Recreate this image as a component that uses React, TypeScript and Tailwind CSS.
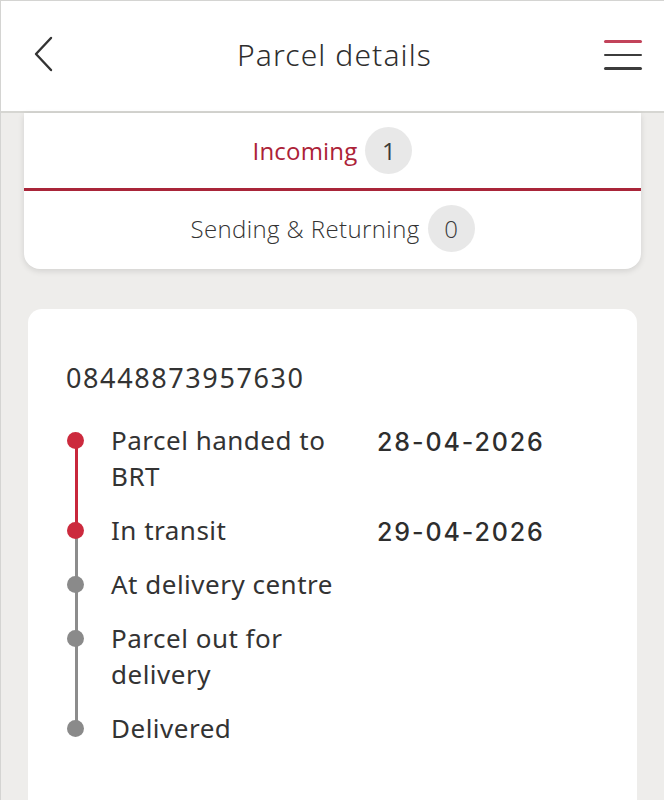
import React from "react";

const steps = [
  { label: "Parcel handed to BRT", date: "28-04-2026", done: true, lineRed: true },
  { label: "In transit", date: "29-04-2026", done: true, lineRed: false },
  { label: "At delivery centre", date: "", done: false, lineRed: false },
  { label: "Parcel out for delivery", date: "", done: false, lineRed: false },
  { label: "Delivered", date: "", done: false, lineRed: false },
];

export default function App() {
  return (
    <div className="w-[664px] h-[800px] overflow-hidden bg-[#eeedeb] border-l border-t border-[#d4d4d2] flex flex-col font-['Noto_Sans',sans-serif] text-[#333333]">
      {/* Header */}
      <header className="h-[112px] shrink-0 bg-white border-b-2 border-[#d6d6d2] flex items-center justify-between pl-[32px] pr-[22px] pb-[2px]">
        <svg width="22" height="36" viewBox="0 0 22 36" fill="none" className="mt-[-2px]">
          <path d="M18 2 L3 18 L18 34" stroke="#333" strokeWidth="2.4" strokeLinecap="round" strokeLinejoin="round" />
        </svg>
        <h1 className="text-[30px] font-light tracking-[1.1px] text-[#2e2e2e] leading-none ml-[10px]">Parcel details</h1>
        <div className="flex flex-col gap-[11px] w-[38px]">
          <span className="block h-[2.5px] bg-[#c2435a] rounded-full" />
          <span className="block h-[2.5px] bg-[#3c3c3c] rounded-full" />
          <span className="block h-[2.5px] bg-[#3c3c3c] rounded-full" />
        </div>
      </header>

      {/* Tabs card */}
      <div className="mx-[23px] bg-white rounded-b-[16px] shadow-[0_2px_6px_rgba(0,0,0,0.12)] flex flex-col font-['Open_Sans',sans-serif]">
        <div className="h-[75px] flex items-center justify-center gap-[8px]">
          <span className="text-[24px] text-[#ac2237] font-normal tracking-[0.2px]">Incoming</span>
          <span className="w-[47px] h-[47px] rounded-full bg-[#e8e8e8] flex items-center justify-center text-[24px] text-[#3a3a3a]">1</span>
        </div>
        <div className="h-[3px] bg-[#a92539]" />
        <div className="h-[78px] pb-[3px] flex items-center justify-center gap-[8px]">
          <span className="text-[24px] text-[#333] font-light tracking-[0.4px]">Sending &amp; Returning</span>
          <span className="w-[47px] h-[47px] rounded-full bg-[#e8e8e8] flex items-center justify-center text-[24px] text-[#3a3a3a] font-light">0</span>
        </div>
      </div>

      {/* Parcel card */}
      <div className="mx-[27px] mt-[40px] flex-1 bg-white rounded-t-[14px] pl-[38px] pt-[51px]">
        <div className="text-[27px] leading-[36px] tracking-[1.6px] text-[#333]">08448873957630</div>
        <div className="mt-[26px] flex flex-col">
          {steps.map((s, i) => (
            <div key={i} className="relative flex pb-[18px]">
              {i < steps.length - 1 && (
                <span
                  className={
                    "absolute left-[9px] top-[18px] bottom-[-18px] w-[3px] " +
                    (s.lineRed ? "bg-[#c8283c]" : "bg-[#8c8c8c]")
                  }
                />
              )}
              <div className="w-[45px] shrink-0 h-[36px] flex items-center">
                <span
                  className={
                    "relative block ml-px w-[17px] h-[17px] rounded-full " +
                    (s.done ? "bg-[#cc2a3d]" : "bg-[#8a8a8a]")
                  }
                />
              </div>
              <div className="w-[266px] shrink-0 pr-[18px] text-[26px] leading-[36px] tracking-[0.5px] text-[#333]">{s.label}</div>
              <div className="relative top-[2px] font-['Inter',sans-serif] text-[25px] leading-[36px] font-medium tracking-[1.9px] text-[#2e2e2e]">{s.date}</div>
            </div>
          ))}
        </div>
      </div>
    </div>
  );
}
